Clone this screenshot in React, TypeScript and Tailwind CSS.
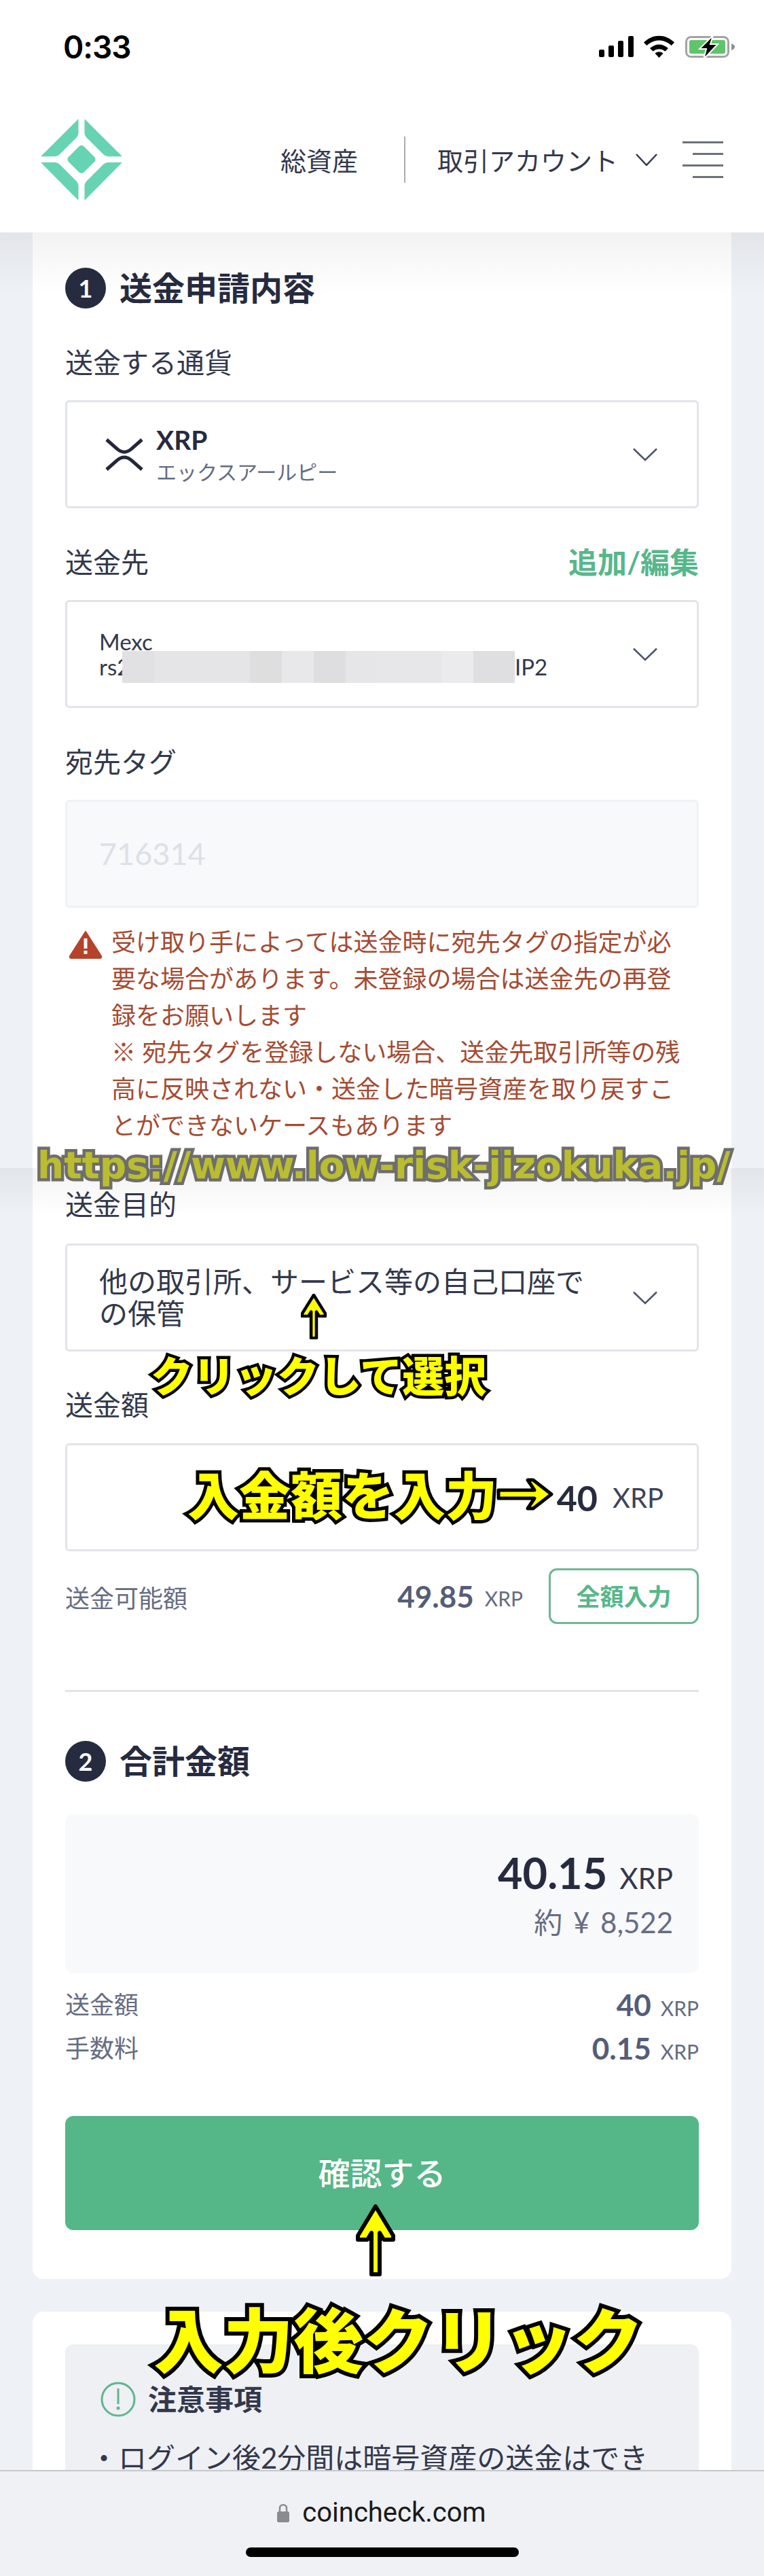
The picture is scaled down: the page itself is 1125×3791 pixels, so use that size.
import React from 'react';

const Chevron = () => (
  <svg width="36" height="20" viewBox="0 0 36 20" fill="none" className="shrink-0">
    <path d="M1 1.5 L18 18 L35 1.5" stroke="#4d546c" strokeWidth="2.5" />
  </svg>
);

const Logo = () => (
  <svg width="120" height="120" viewBox="60 177 120 120" className="shrink-0">
    <g fill="#66d3b2">
      <path d="M115.5 177V198Q115.5 201.500 113 204L88 229Q84.500 232.300 81 232.300H60Z" />
      <path d="M124.500 177V198Q124.500 201.500 127 204L152 229Q155.500 232.300 159 232.300H180Z" />
      <path d="M60 241H81Q84.500 241 88 244L113 269Q115.500 272 115.500 275V297Z" />
      <path d="M180 241H159Q155.500 241 152 244L127 269Q124.500 272 124.500 275V297Z" />
      <rect x="104" y="220.500" width="32" height="32" rx="5" transform="rotate(45 120 236.500)" />
    </g>
  </svg>
);

const StatusIcons = () => (
  <svg width="240" height="80" viewBox="0 0 240 80" className="shrink-0">
    <g fill="#000">
      <rect x="22" y="33" width="8" height="11" rx="2" />
      <rect x="36" y="27" width="8" height="17" rx="2" />
      <rect x="50" y="20" width="8" height="24" rx="2" />
      <rect x="65" y="13" width="8" height="31" rx="2" />
      <path d="M88 22.500C101 9.500 120 9.500 133 22.500L128.500 27C118 17 103 17 92.500 27Z" />
      <path d="M97 31C105 23.500 116 23.500 124 31L119.500 35.500C114 31 107 31 101.500 35.500Z" />
      <path d="M104.500 38.500C108 35.500 113 35.500 116.500 38.500L110.500 45Z" />
    </g>
    <rect x="150.500" y="14.500" width="62" height="29" rx="7" fill="none" stroke="#a3a3a3" strokeWidth="3" />
    <rect x="155" y="19" width="53" height="20" rx="3" fill="#5fc46a" />
    <path d="M217 24C220 25 222 27 222 29C222 31 220 33 217 34Z" fill="#8d8d8d" />
    <path d="M190 12L170 32H180L176 47L197 25H186Z" fill="#000" stroke="#fff" strokeWidth="2" />
  </svg>
);

const XrpIcon = () => (
  <svg width="56" height="48" viewBox="0 0 56 48" fill="none" className="shrink-0">
    <path d="M2 2L18 16C24 21.500 32 21.500 38 16L54 2" stroke="#23273a" strokeWidth="5" />
    <path d="M2 46L18 32C24 26.500 32 26.500 38 32L54 46" stroke="#23273a" strokeWidth="5" />
  </svg>
);

const UpArrow = ({ w, h, sw }: { w: number; h: number; sw: number }) => (
  <svg width={w} height={h} viewBox="0 0 58 106" preserveAspectRatio="none" className="block">
    <path
      d="M29 3L55 46V52H41L35 42V103H23V42L17 52H3V46Z"
      fill="#ffff00"
      stroke="#000"
      strokeWidth={sw}
      strokeLinejoin="round"
    />
  </svg>
);

const SectionHead = ({ num, title }: { num: string; title: string }) => (
  <div className="flex items-center h-[60px]">
    <div className="w-[60px] h-[60px] rounded-full bg-[#262b40] text-white font-bold text-[36px] flex items-center justify-center">
      {num}
    </div>
    <h2 className="ml-[20px] text-[48px] leading-[60px] font-bold text-[#262b40]">{title}</h2>
  </div>
);

const Label = ({ children, className }: { children: React.ReactNode; className?: string }) => (
  <div className={`h-[50px] leading-[50px] text-[41px] text-[#33384c] ${className ?? ''}`}>{children}</div>
);

const SelectBox = ({ children, className }: { children: React.ReactNode; className?: string }) => (
  <div
    className={`h-[159px] border-[3px] border-[#e2e4ea] rounded-[6px] flex items-center justify-between pr-[58px] bg-white ${className ?? ''}`}
  >
    {children}
  </div>
);

const warningLines = [
  '受け取り手によっては送金時に宛先タグの指定が必',
  '要な場合があります。未登録の場合は送金先の再登',
  '録をお願いします',
  '※ 宛先タグを登録しない場合、送金先取引所等の残',
  '高に反映されない・送金した暗号資産を取り戻すこ',
  'とができないケースもあります',
];

const blurBlocks = [
  'w-[47px] bg-[#e1e1e3]',
  'w-[141px] bg-[#e5e5e7]',
  'w-[47px] bg-[#dededf]',
  'w-[47px] bg-[#e8e8ea]',
  'w-[47px] bg-[#dedee0]',
  'w-[46px] bg-[#e6e6e8]',
  'w-[95px] bg-[#e7e7e9]',
  'w-[47px] bg-[#ebebed]',
  'w-[61px] bg-[#dfdfe1]',
];

const FeeRow = ({ label, value }: { label: string; value: string }) => (
  <div className="flex items-center justify-between h-[64px]">
    <span className="text-[36px] text-[#656c83]">{label}</span>
    <span className="flex items-baseline">
      <span className="text-[44px] font-bold text-[#555d78]">{value}</span>
      <span className="ml-[14px] text-[30px] text-[#656c83]">XRP</span>
    </span>
  </div>
);

export default function App() {
  return (
    <div className="relative w-[1125px] h-[3791px] overflow-hidden bg-[#eef1f5] font-['Lato','Noto_Sans_CJK_JP',sans-serif]">
      {/* top bars */}
      <header className="relative z-10 h-[342px] bg-white">
        <div className="h-[120px] flex items-start justify-between pt-[40px] pl-[93px] pr-[25px]">
          <span className="mt-[2px] text-[46px] leading-[54px] font-semibold text-black font-['Inter',sans-serif] tracking-[-1px]">
            0:33
          </span>
          <StatusIcons />
        </div>
        <div className="h-[222px] flex items-center pl-[60px] pr-[60px] pt-[8px]">
          <Logo />
          <div className="ml-auto flex items-center text-[38px] text-[#33384c]">
            <span className="mt-[2px]">総資産</span>
            <div className="w-[2px] h-[68px] bg-[#a9acb6] ml-[68px] mr-[47px]" />
            <span className="mt-[2px]">取引アカウント</span>
            <svg width="32" height="18" viewBox="0 0 32 18" fill="none" className="ml-[26px]">
              <path d="M1 1L16 17L31 1" stroke="#33384c" strokeWidth="2.500" />
            </svg>
            <div className="ml-[37px] w-[60px] flex flex-col items-end gap-[14px]">
              <div className="h-[3px] w-[60px] bg-[#6d717d]" />
              <div className="h-[3px] w-[45px] bg-[#6d717d]" />
              <div className="h-[3px] w-[60px] bg-[#6d717d]" />
              <div className="h-[3px] w-[45px] bg-[#6d717d]" />
            </div>
          </div>
        </div>
        <div className="absolute top-full left-0 w-full h-[90px] bg-gradient-to-b from-black/5 to-transparent" />
      </header>

      <main className="px-[48px]">
        <section className="bg-white rounded-b-[16px] px-[48px] pt-[52px] pb-[72px]">
          <SectionHead num="1" title="送金申請内容" />

          <Label className="mt-[55px] mb-[30px]">送金する通貨</Label>
          <SelectBox className="pl-[56px]">
            <div className="flex items-center">
              <XrpIcon />
              <div className="ml-[19px]">
                <div className="text-[39px] leading-[46px] font-bold text-[#262b40]">XRP</div>
                <div className="mt-[4px] text-[30px] leading-[40px] text-[#656c83]">エックスアールピー</div>
              </div>
            </div>
            <Chevron />
          </SelectBox>

          <div className="mt-[55px] mb-[30px] flex justify-between">
            <Label>送金先</Label>
            <span className="text-[43px] leading-[50px] font-bold text-[#57b78b]">追加/編集</span>
          </div>
          <SelectBox className="pl-[47px]">
            <div className="text-[33px] leading-[37px] text-[#33384c]">
              <div>Mexc</div>
              <div className="flex items-center h-[37px]">
                <span className="w-[34px] whitespace-nowrap">rs2</span>
                <div className="relative flex h-[47px] shrink-0">
                  {blurBlocks.map((b, i) => (
                    <div key={i} className={b} />
                  ))}
                </div>
                <span>IP2</span>
              </div>
            </div>
            <Chevron />
          </SelectBox>

          <Label className="mt-[55px] mb-[30px]">宛先タグ</Label>
          <div className="h-[159px] border-[3px] border-[#f1f2f5] rounded-[6px] bg-[#f8f9fa] flex items-center pl-[47px]">
            <span className="text-[45px] text-[#dde0e8]">716314</span>
          </div>

          <div className="mt-[23px] flex pl-[5px]">
            <svg width="50" height="42" viewBox="0 0 50 42" className="shrink-0 mt-[10px]">
              <path d="M25 2L48 38Q49 41 46 41H4Q1 41 2 38Z" fill="#b4432a" stroke="#b4432a" strokeWidth="2" strokeLinejoin="round" />
              <rect x="22.500" y="12" width="5" height="15" fill="#fff" />
              <rect x="22.500" y="30" width="5" height="5" fill="#fff" />
            </svg>
            <div className="ml-[13px] text-[36px] leading-[54px] text-[#a44b32] whitespace-nowrap">
              {warningLines.map((line) => (
                <div key={line}>{line}</div>
              ))}
            </div>
          </div>

          <Label className="mt-[65px] mb-[32px]">送金目的</Label>
          <SelectBox className="pl-[47px]">
            <div className="w-[730px] text-[42px] leading-[47px] text-[#33384c]">
              他の取引所、サービス等の自己口座での保管
            </div>
            <Chevron />
          </SelectBox>

          <Label className="mt-[54px] mb-[31px]">送金額</Label>
          <div className="h-[159px] border-[3px] border-[#e2e4ea] rounded-[6px] flex items-center justify-end pr-[49px]">
            <span className="text-[52px] font-bold text-[#262b40]">40</span>
            <span className="ml-[22px] text-[40px] text-[#3d4358]">XRP</span>
          </div>

          <div className="mt-[25px] flex items-center">
            <span className="mt-[6px] text-[36px] text-[#656c83]">送金可能額</span>
            <span className="ml-auto text-[44px] font-bold text-[#555d78]">49.85</span>
            <span className="ml-[16px] mt-[6px] text-[30px] text-[#656c83]">XRP</span>
            <div className="ml-[38px] w-[221px] h-[82px] border-[3px] border-[#6db894] rounded-[12px] flex items-center justify-center text-[35px] font-bold text-[#57b78b]">
              全額入力
            </div>
          </div>

          <div className="mt-[97px] h-[3px] bg-[#e2e4e8]" />

          <div className="mt-[72px]">
            <SectionHead num="2" title="合計金額" />
          </div>

          <div className="mt-[48px] h-[234px] rounded-[12px] bg-[#f8f9fb] flex flex-col items-end justify-center pr-[38px]">
            <div className="flex items-baseline">
              <span className="text-[63px] leading-[70px] font-bold text-[#262b40]">40.15</span>
              <span className="ml-[18px] text-[42px] text-[#33384c]">XRP</span>
            </div>
            <div className="mt-[8px] text-[42px] leading-[50px] text-[#656c83] [word-spacing:5px]">約 ¥ 8,522</div>
          </div>

          <div className="mt-[14px]">
            <FeeRow label="送金額" value="40" />
            <FeeRow label="手数料" value="0.15" />
          </div>

          <button className="mt-[68px] w-full h-[168px] rounded-[12px] bg-[#55b688] text-white text-[47px] font-medium flex items-center justify-center">
            確認する
          </button>
        </section>

        <section className="mt-[48px] bg-white rounded-[16px] px-[48px] pt-[48px] pb-[48px]">
          <div className="bg-[#eef0f4] rounded-[12px] pt-[55px] px-[52px] pb-[60px]">
            <div className="flex items-center h-[52px]">
              <svg width="52" height="52" viewBox="0 0 52 52" fill="none" className="shrink-0">
                <circle cx="26" cy="26" r="24" stroke="#5fb690" strokeWidth="3" />
                <rect x="24.500" y="10" width="3" height="23" fill="#5fb690" />
                <circle cx="26" cy="39" r="2.500" fill="#5fb690" />
              </svg>
              <span className="ml-[18px] text-[42px] font-bold text-[#33384c]">注意事項</span>
            </div>
            <div className="mt-[30px] -ml-[16px] text-[42px] leading-[60px] text-[#33384c] whitespace-nowrap">
              ・ログイン後2分間は暗号資産の送金はでき
            </div>
          </div>
        </section>
      </main>

      {/* stitched screenshot seam */}
      <div className="absolute top-[1719px] left-0 w-full h-[70px] bg-gradient-to-b from-black/5 to-transparent" />

      {/* browser bar */}
      <div className="absolute bottom-0 left-0 w-full h-[156px] bg-[#eff1f4] border-t-2 border-[#c6c7cb]">
        <div className="flex items-center justify-center mt-[36px] h-[50px] pr-[1px]">
          <svg width="18" height="28" viewBox="0 0 18 28" fill="none" className="shrink-0">
            <path d="M4 13V7C4 0.500 14 0.500 14 7V13" stroke="#8a8b90" strokeWidth="2.500" />
            <rect x="0" y="12" width="18" height="16" rx="2.500" fill="#8a8b90" />
          </svg>
          <span className="ml-[19px] text-[40px] text-[#1a1a1a] font-['Roboto',sans-serif]">coincheck.com</span>
        </div>
        <div className="mt-[26px] mx-auto w-[402px] h-[14px] rounded-full bg-black" />
      </div>

      {/* annotations on the screenshot */}
      <div className="absolute left-[55px] top-[1680px] whitespace-nowrap text-[55px] leading-[70px] font-bold text-[#b9bd2f] font-['DejaVu_Sans',sans-serif] [-webkit-text-stroke:9px_#6e6e6e] [paint-order:stroke_fill]">
        https://www.low-risk-jizokuka.jp/
      </div>
      <div className="absolute left-[443px] top-[1904px]">
        <UpArrow w={38} h={67} sw={7} />
      </div>
      <div className="absolute left-[222px] top-[1994px] whitespace-nowrap text-[62px] leading-[62px] font-black text-[#ffff00] [-webkit-text-stroke:9px_#000] [paint-order:stroke_fill]">
        クリックして選択
      </div>
      <div className="absolute left-[276px] top-[2163px] whitespace-nowrap text-[76px] leading-[76px] font-black text-[#ffff00] [-webkit-text-stroke:10px_#000] [paint-order:stroke_fill]">
        入金額を入力
      </div>
      <svg width="84" height="52" viewBox="0 0 84 52" className="absolute left-[731px] top-[2173px]">
        <path
          d="M3 20H56L46 5H54L81 26L54 47H46L56 32H3Z"
          fill="#ffff00"
          stroke="#000"
          strokeWidth="5"
          strokeLinejoin="round"
        />
      </svg>
      <div className="absolute left-[524px] top-[3244px]">
        <UpArrow w={58} h={106} sw={6} />
      </div>
      <div className="absolute left-[226px] top-[3393px] whitespace-nowrap text-[103px] leading-[103px] font-black text-[#ffff00] [-webkit-text-stroke:12px_#000] [paint-order:stroke_fill]">
        入力後クリック
      </div>
    </div>
  );
}
